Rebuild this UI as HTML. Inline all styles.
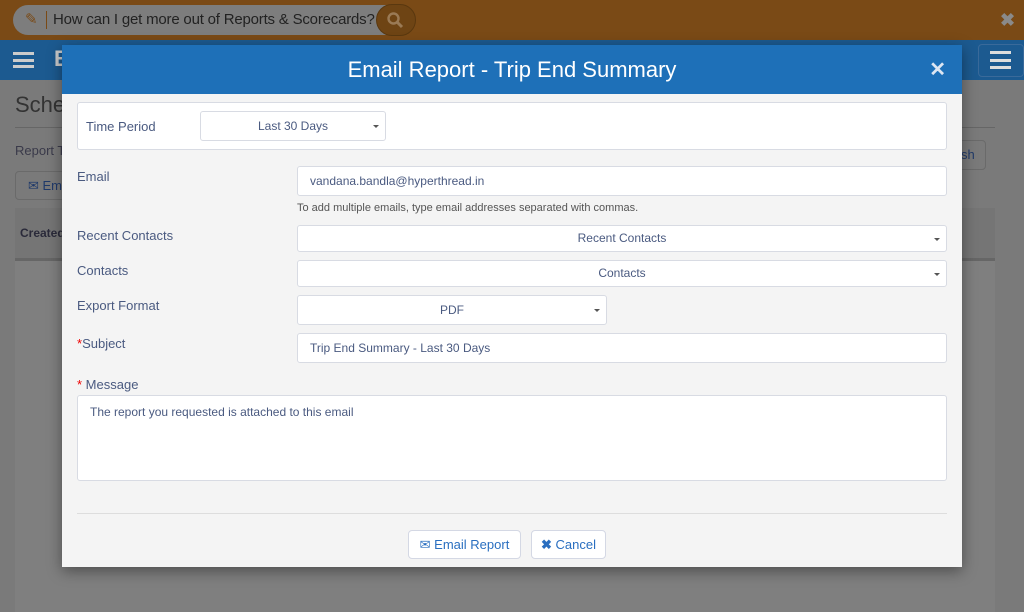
<!DOCTYPE html>
<html><head><style>
*{box-sizing:border-box;margin:0;padding:0}
body{width:1024px;height:612px;overflow:hidden;position:relative;background:#7a7a7a;font-family:"Liberation Sans",sans-serif;color:#4a5a80}
.abs{position:absolute}
.top{left:0;top:0;width:1024px;height:40px;background:#7a4a16}
.search{left:13px;top:5px;width:400px;height:30px;border-radius:15px;background:#7d7d7d;font-size:15px;letter-spacing:-0.2px;color:#222;line-height:30px;padding-left:40px;white-space:nowrap}
.nav{left:0;top:40px;width:1024px;height:40px;background:#1c5a90}
.modal{left:62px;top:45px;width:900px;height:522px;background:#f4f4f4;box-shadow:0 4px 14px rgba(0,0,0,.4)}
.mh{left:0;top:0;width:900px;height:49px;background:#1e70b8;color:#fff;font-size:22px;text-align:center;line-height:50px}
.box{background:#fff;border:1px solid #d8dbe3;border-radius:3px;font-size:12px;color:#4a5a80}
.lbl{font-size:13px;color:#4a5a80}
.sel{text-align:center;line-height:28px}
.caret{position:absolute;right:6px;top:50%;margin-top:-1px;border-left:3px solid transparent;border-right:3px solid transparent;border-top:3px solid #555}
.red{color:#e00}
.btn{background:#fff;border:1px solid #d4d8e4;border-radius:4px;font-size:13px;color:#2a6fc0;line-height:27px;text-align:center}
</style></head><body>
<div class="abs top"></div>
<div class="abs search"><span class="abs" style="left:12px;top:0;color:#7a4a16;font-size:15px">✎</span><span class="abs" style="left:33px;top:6px;width:1px;height:18px;background:#7a4a16"></span>How can I get more out of Reports &amp; Scorecards?</div>
<div class="abs" style="left:376px;top:4px;width:40px;height:32px;border-radius:16px;background:#6e4414;border:1px solid #5a380f"></div>
<svg class="abs" style="left:386px;top:11px" width="18" height="18"><circle cx="7.5" cy="7.5" r="5" fill="none" stroke="#9a7a55" stroke-width="2.4"/><line x1="11" y1="11" x2="16" y2="16" stroke="#9a7a55" stroke-width="3"/></svg>
<div class="abs" style="left:1000px;top:10px;color:#8a8a8a;font-size:18px;font-weight:bold">✖</div>
<div class="abs nav"></div>
<div class="abs" style="left:13px;top:52px;width:21px;height:16px;border-top:3px solid #ccc;border-bottom:3px solid #ccc"></div><div class="abs" style="left:13px;top:58.5px;width:21px;height:3px;background:#ccc"></div>
<div class="abs" style="left:54px;top:46px;color:#ccc;font-size:22px;font-weight:bold">E</div>
<div class="abs" style="left:978px;top:44px;width:46px;height:33px;border:1px solid #3a6a9a;border-radius:4px"></div>
<div class="abs" style="left:990px;top:51px;width:21px;height:18px;border-top:3px solid #ddd;border-bottom:3px solid #ddd"></div><div class="abs" style="left:990px;top:58.5px;width:21px;height:3px;background:#ddd"></div>
<div class="abs" style="left:15px;top:92px;font-size:22px;color:#333">Sche</div>
<div class="abs" style="left:15px;top:127px;width:980px;height:1px;background:#666"></div>
<div class="abs" style="left:15px;top:143px;font-size:13px;color:#3a3a4a">Report T</div>
<div class="abs" style="left:15px;top:171px;width:60px;height:29px;border:1px solid #6a6a6a;border-radius:4px;font-size:13px;color:#203a6a;line-height:27px;padding-left:12px">✉ Em</div>
<div class="abs" style="left:940px;top:140px;width:46px;height:30px;border:1px solid #6a6a6a;border-radius:4px;font-size:13px;color:#203a6a;line-height:28px;padding-left:20px">sh</div>
<div class="abs" style="left:15px;top:208px;width:980px;height:404px;background:#7f7f7f"></div>
<div class="abs" style="left:15px;top:208px;width:980px;height:50px;background:#757575"></div>
<div class="abs" style="left:15px;top:258px;width:980px;height:3px;background:#666"></div>
<div class="abs" style="left:20px;top:226px;font-size:12px;font-weight:bold;color:#2a2a3a">Created</div>

<div class="abs modal">
<div class="abs mh">Email Report - Trip End Summary</div>
<div class="abs" style="right:16px;top:12px;color:#dde6f2;font-size:20px;font-weight:bold">✕</div>
<div class="abs box" style="left:15px;top:57px;width:870px;height:48px"></div>
<div class="abs lbl" style="left:24px;top:74px">Time Period</div>
<div class="abs box sel" style="left:138px;top:66px;width:186px;height:30px">Last 30 Days<span class="caret"></span></div>
<div class="abs lbl" style="left:15px;top:124px">Email</div>
<div class="abs box" style="left:235px;top:121px;width:650px;height:30px;line-height:28px;padding-left:12px">vandana.bandla@hyperthread.in</div>
<div class="abs" style="left:235px;top:157px;font-size:11px;color:#555">To add multiple emails, type email addresses separated with commas.</div>
<div class="abs lbl" style="left:15px;top:183px">Recent Contacts</div>
<div class="abs box sel" style="left:235px;top:180px;width:650px;height:27px;line-height:25px">Recent Contacts<span class="caret"></span></div>
<div class="abs lbl" style="left:15px;top:218px">Contacts</div>
<div class="abs box sel" style="left:235px;top:215px;width:650px;height:27px;line-height:25px">Contacts<span class="caret"></span></div>
<div class="abs lbl" style="left:15px;top:253px">Export Format</div>
<div class="abs box sel" style="left:235px;top:250px;width:310px;height:30px">PDF<span class="caret"></span></div>
<div class="abs lbl" style="left:15px;top:291px"><span class="red">*</span>Subject</div>
<div class="abs box" style="left:235px;top:288px;width:650px;height:30px;line-height:28px;padding-left:12px">Trip End Summary - Last 30 Days</div>
<div class="abs lbl" style="left:15px;top:332px"><span class="red">*</span> Message</div>
<div class="abs box" style="left:15px;top:350px;width:870px;height:86px;padding:9px 12px">The report you requested is attached to this email</div>
<div class="abs" style="left:15px;top:468px;width:870px;height:1px;background:#ddd"></div>
<div class="abs btn" style="left:346px;top:485px;width:113px;height:29px">✉ Email Report</div>
<div class="abs btn" style="left:469px;top:485px;width:75px;height:29px"><b>✖</b> Cancel</div>
</div>
</body></html>
